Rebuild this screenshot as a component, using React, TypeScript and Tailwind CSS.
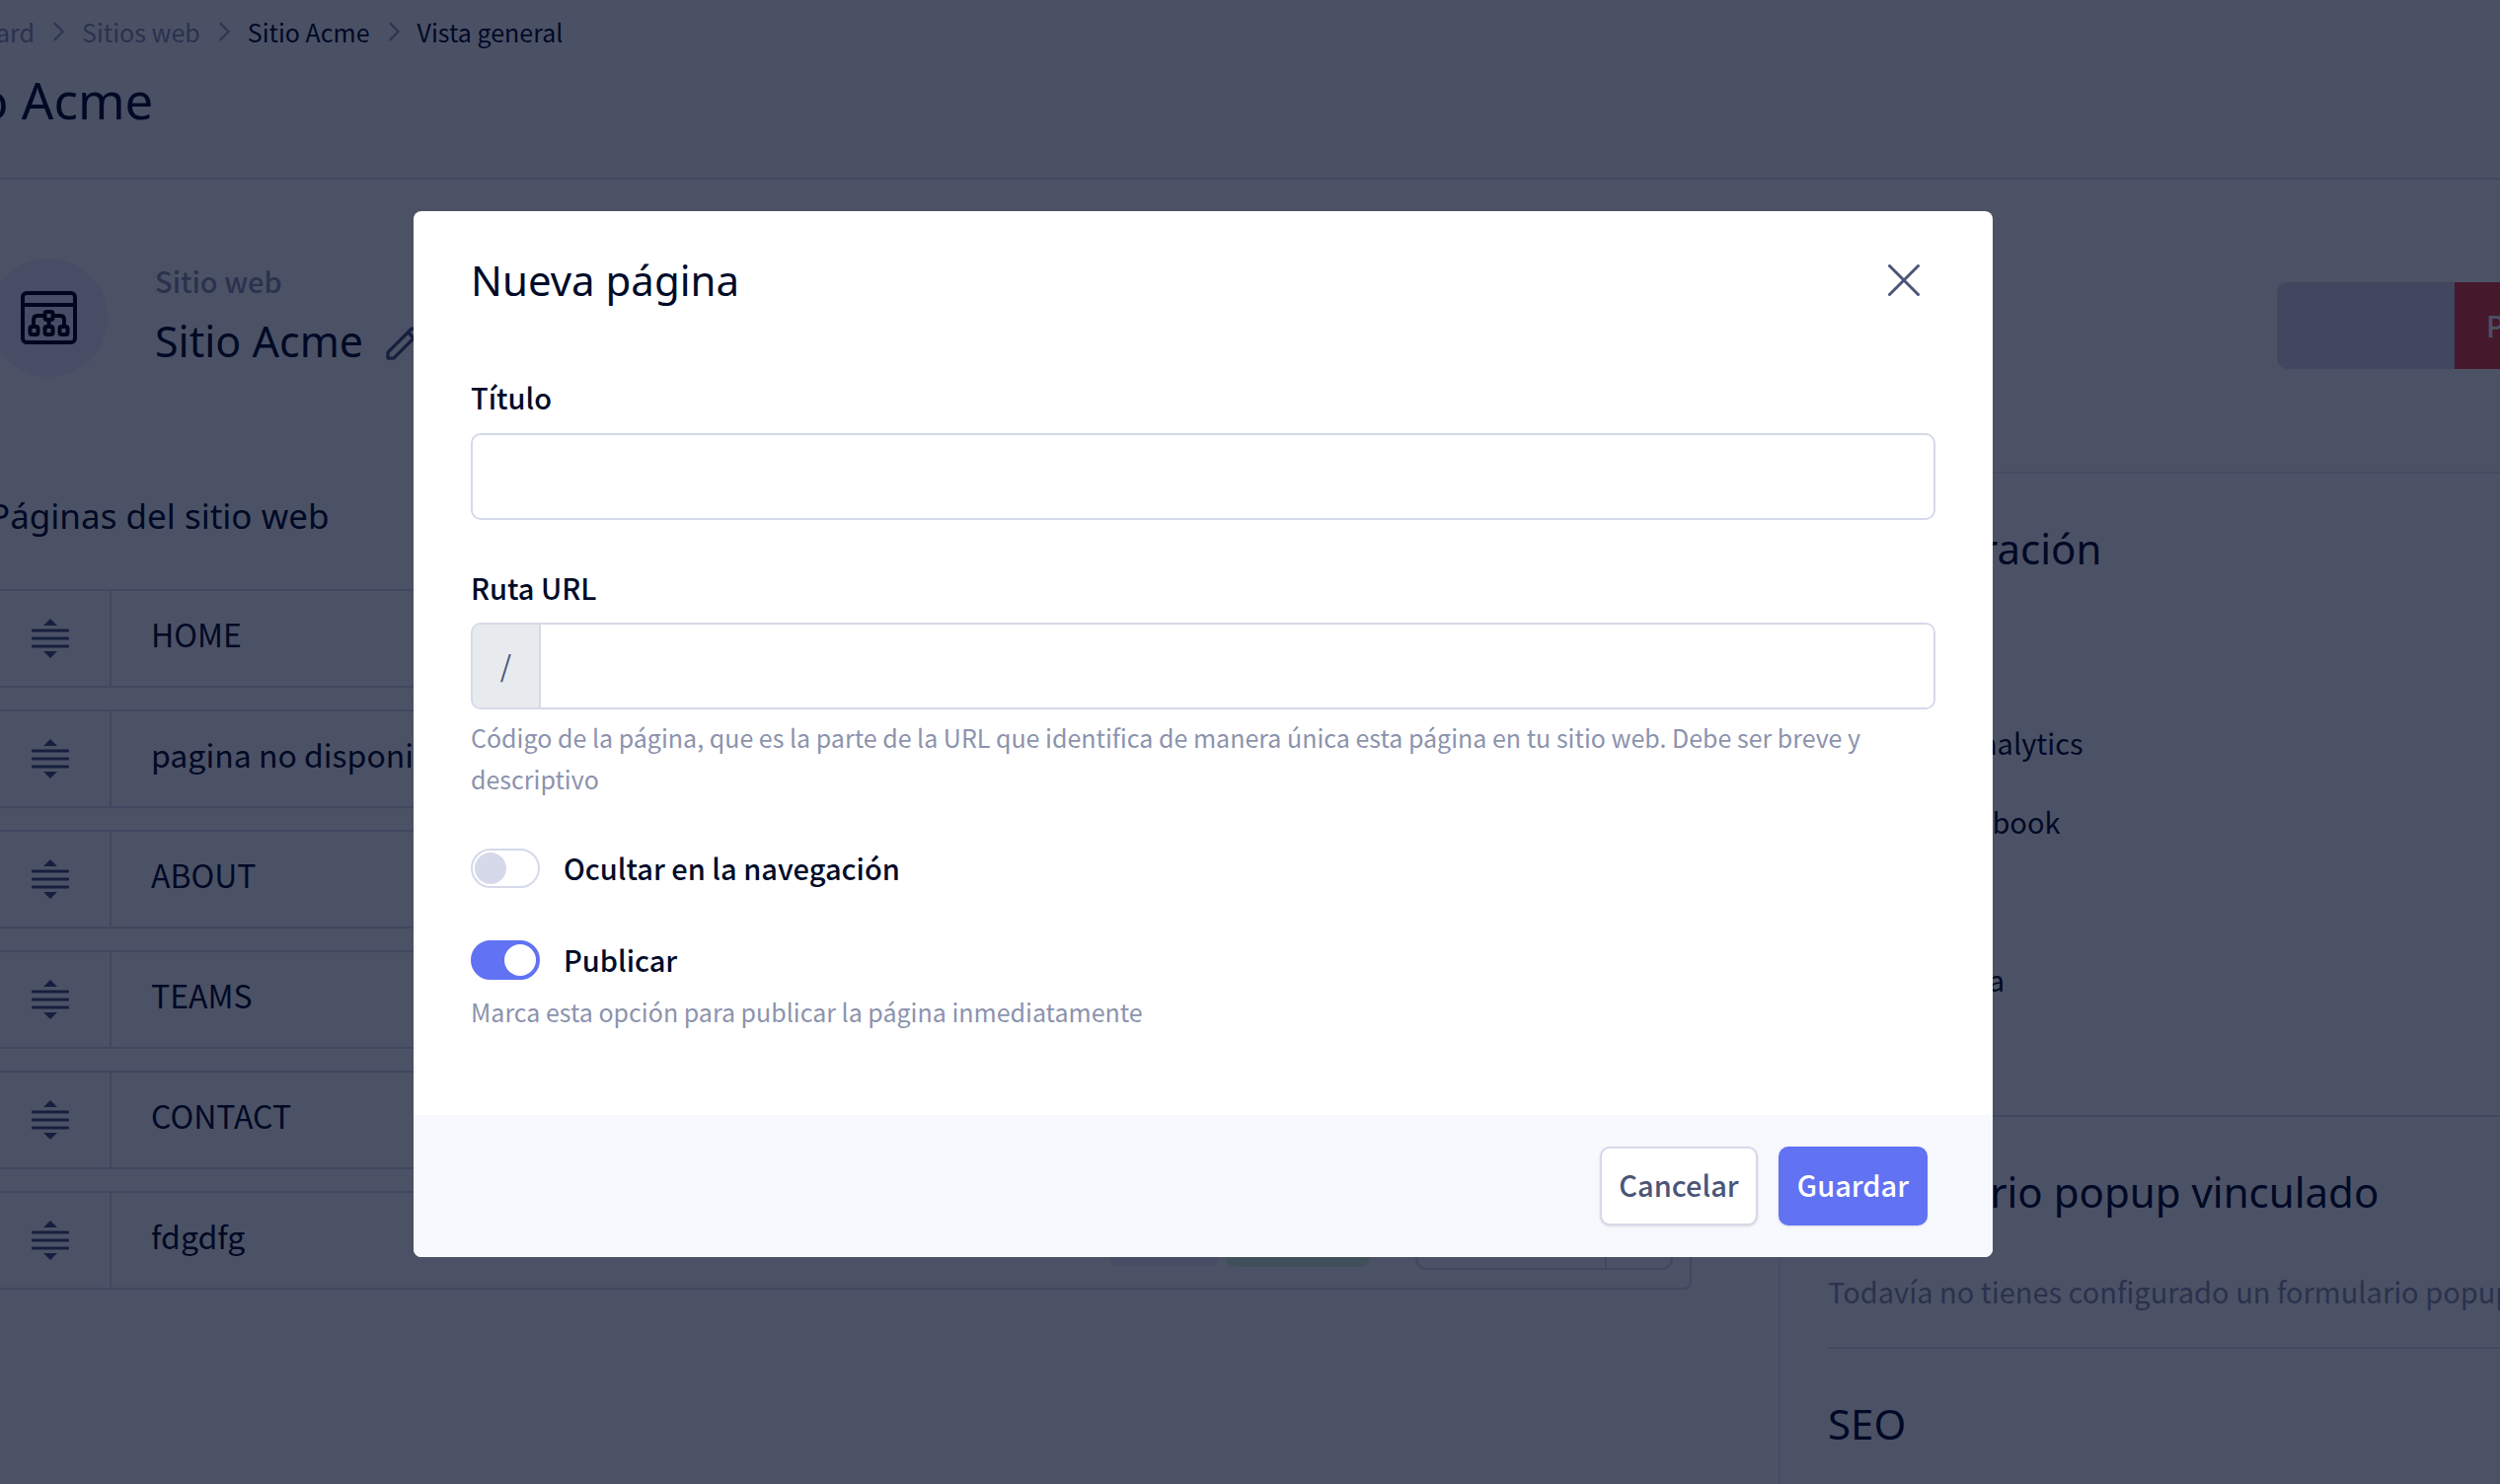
import React, { useState } from "react";

const pages = ["HOME", "pagina no disponible", "ABOUT", "TEAMS", "CONTACT", "fdgdfg"];
const settings = ["Google Analytics", "Pixel Facebook", "Idioma", "Estadística"];

function Chevron() {
  return (
    <svg className="size-7 shrink-0 text-[#9aa0bf]" viewBox="0 0 24 24" fill="none" stroke="currentColor" strokeWidth="2" strokeLinecap="round" strokeLinejoin="round" aria-hidden="true">
      <path d="M9 5l7 7-7 7" />
    </svg>
  );
}

function SiteIcon() {
  return (
    <svg className="h-[54px] w-[57px]" viewBox="0 0 57 54" fill="none" stroke="#00030f" strokeWidth="4" strokeLinejoin="round" aria-hidden="true">
      <rect x="2" y="2" width="53" height="50" rx="4" />
      <path d="M2 14h53" />
      <path d="M24 25h-7q-4 0-4 4v6M33 25h7q4 0 4 4v6M28.500 30v6" />
      <rect x="24.500" y="21" width="8" height="8" rx="2" />
      <rect x="9.500" y="36" width="8" height="8" rx="2" />
      <rect x="24.500" y="36" width="8" height="8" rx="2" />
      <rect x="39.500" y="36" width="8" height="8" rx="2" />
    </svg>
  );
}

function PencilIcon() {
  return (
    <svg className="size-10" viewBox="0 0 24 24" fill="none" stroke="currentColor" strokeWidth="2" strokeLinecap="round" strokeLinejoin="round" aria-hidden="true">
      <path d="M15.232 5.232l3.536 3.536m-2.036-5.036a2.500 2.500 0 113.536 3.536L6.500 21.036H3v-3.572L16.732 3.732z" />
    </svg>
  );
}

function DragIcon() {
  return (
    <svg className="h-10 w-[38px]" viewBox="0 0 38 40" fill="currentColor" aria-hidden="true">
      <path d="M19 0l7 7H12z" />
      <rect y="10.500" width="38" height="3" rx="1" />
      <rect y="18.500" width="38" height="3" rx="1" />
      <rect y="26.500" width="38" height="3" rx="1" />
      <path d="M19 40l7-7H12z" />
    </svg>
  );
}

function PageRow({ name }: { name: string }) {
  return (
    <li className="flex h-[100px] items-stretch rounded-lg border-2 border-[#d5d9e9]">
      <button aria-label={"Mover " + name} className="flex w-[122px] items-center justify-end border-r-2 border-[#d5d9e9] pr-[41px] text-[#4b5578]">
        <DragIcon />
      </button>
      <a href="#pagina" className="flex-1 self-center pb-2.5 pl-10 text-[32px] leading-[48px]">{name}</a>
      <div className="flex items-center pr-[17px]">
        <span className="mr-[7px] h-[52px] w-[110px] rounded-lg bg-[#ebedff]" />
        <span className="mr-[47px] h-[54px] w-[145px] rounded-lg bg-[#dbf5db]" />
        <div className="flex h-[60px] w-[261px] rounded-xl border-2 border-[#d5d9e9]">
          <button aria-label={"Editar " + name} className="flex-1" />
          <button aria-label={"Opciones de " + name} className="w-[67px] border-l-2 border-[#d5d9e9]" />
        </div>
      </div>
    </li>
  );
}

function Toggle({ id, label, on, onChange }: { id: string; label: string; on: boolean; onChange: (v: boolean) => void }) {
  return (
    <div className="flex h-10 items-center gap-6">
      <input
        id={id}
        type="checkbox"
        role="switch"
        checked={on}
        onChange={(e) => onChange(e.target.checked)}
        className="h-10 w-[70px] shrink-0 appearance-none rounded-full border-2 border-[#d5d9e9] bg-white p-0.5 before:block before:size-8 before:rounded-full before:bg-[#d5d9e9] checked:border-[#6172f3] checked:bg-[#6172f3] checked:before:ml-[30px] checked:before:bg-white"
      />
      <label htmlFor={id} className="pb-0.5 text-[29px] leading-10 font-medium">{label}</label>
    </div>
  );
}

function NewPageDialog() {
  const [hidden, setHidden] = useState(false);
  const [published, setPublished] = useState(true);
  return (
    <form role="dialog" aria-modal="true" aria-labelledby="dialog-title" onSubmit={(e) => e.preventDefault()} className="w-full max-w-[1600px] overflow-hidden rounded-lg bg-white">
      <div className="px-[58px] pt-11 pb-[84px]">
        <div className="flex items-center justify-between pr-4">
          <h2 id="dialog-title" className="font-['Noto_Sans',sans-serif] text-[42px] leading-[52px]">Nueva página</h2>
          <button type="button" aria-label="Cerrar" className="text-[#4b5578]">
            <svg className="size-8" viewBox="0 0 32 32" fill="none" stroke="currentColor" strokeWidth="3" strokeLinecap="round" aria-hidden="true">
              <path d="M1.500 1.500l29 29M30.500 1.500l-29 29" />
            </svg>
          </button>
        </div>

        <label htmlFor="titulo" className="mt-[68px] block text-[29px] leading-[48px] font-medium">Título</label>
        <input id="titulo" type="text" className="mt-[13px] block h-[88px] w-full rounded-[10px] border-2 border-[#d5d9e9] bg-white px-6 text-[29px] outline-none" />

        <label htmlFor="ruta" className="mt-11 block text-[29px] leading-[48px] font-medium">Ruta URL</label>
        <div className="mt-3 flex h-[88px] overflow-hidden rounded-[10px] border-2 border-[#d5d9e9]">
          <span className="flex w-[69px] items-center justify-center border-r-2 border-[#d5d9e9] bg-[#e7ebee] pb-1 text-[29px] leading-[48px] text-[#4b5578]">/</span>
          <input id="ruta" type="text" className="min-w-0 flex-1 bg-white px-6 text-[29px] outline-none" />
        </div>
        <p className="mt-[7px] text-[25px] leading-[42px] text-[#8c93ad]">
          Código de la página, que es la parte de la URL que identifica de manera única esta página en tu sitio web. Debe ser breve y descriptivo
        </p>

        <div className="mt-[50px]">
          <Toggle id="ocultar" label="Ocultar en la navegación" on={hidden} onChange={setHidden} />
        </div>
        <div className="mt-[53px]">
          <Toggle id="publicar" label="Publicar" on={published} onChange={setPublished} />
        </div>
        <p className="mt-[11px] text-[25px] leading-[42px] text-[#8c93ad]">Marca esta opción para publicar la página inmediatamente</p>
      </div>
      <div className="flex h-36 items-center justify-end gap-[21px] bg-[#f8f9fe] pr-[66px]">
        <button type="button" className="h-20 w-40 rounded-[10px] border-2 border-[#d5d9e9] bg-white pb-0.5 text-[29px] font-medium text-[#4b5578] shadow">Cancelar</button>
        <button type="submit" className="h-20 w-[151px] rounded-[10px] bg-[#6172f3] pb-0.5 text-[29px] font-medium text-white shadow">Guardar</button>
      </div>
    </form>
  );
}

export default function App() {
  return (
    <div className="h-screen overflow-hidden bg-white font-['Noto_Sans_CJK_SC',sans-serif] text-[#000b29]">
      <div className="relative -ml-[95px] min-h-full">
        <header className="border-b-2 border-[#d5d9e9] bg-[#fafaff] pb-[50px]">
          <nav aria-label="Ruta" className="flex h-16 items-center gap-2.5 text-[25px] leading-9">
            <a href="#dashboard" className="w-[130px] text-right text-[#8c93ad]">Dashboard</a>
            <Chevron />
            <a href="#sitios" className="text-[#8c93ad]">Sitios web</a>
            <Chevron />
            <a href="#acme">Sitio Acme</a>
            <Chevron />
            <span aria-current="page">Vista general</span>
          </nav>
          <h1 className="h-[66px] font-['Noto_Sans',sans-serif] text-[51px] leading-[74px]">Sitio Acme</h1>
        </header>

        <section className="-mr-[134px] flex h-[296px] items-start justify-between pl-[84px]">
          <div className="flex pt-20">
            <div className="flex size-[120px] items-center justify-center rounded-full bg-[#ebedfb]">
              <SiteIcon />
            </div>
            <div className="ml-12">
              <p className="text-[29px] leading-[44px] font-medium text-[#8c93ad]">Sitio web</p>
              <div className="mt-3 flex items-center gap-5">
                <h2 className="font-['Noto_Sans',sans-serif] text-[43px] leading-[56px]">Sitio Acme</h2>
                <button aria-label="Editar nombre" className="pt-1 text-[#4b5578]"><PencilIcon /></button>
              </div>
            </div>
          </div>
          <div className="mt-[104px] flex h-[88px] overflow-hidden rounded-[10px]">
            <button aria-label="Vista previa" className="w-[180px] bg-[#d5d9e9]" />
            <button className="w-[180px] bg-[#e6413f] pl-8 text-left text-[29px] font-medium text-white">Publicar</button>
          </div>
        </section>

        <div className="flex">
          <main className="flex-1 pr-[88px] pl-[84px]">
            <h2 className="pt-[22px] font-['Noto_Sans',sans-serif] text-[35px] leading-[46px]">Páginas del sitio web</h2>
            <ul className="mt-[51px] flex flex-col gap-[22px]">
              {pages.map((name) => (
                <PageRow key={name} name={name} />
              ))}
            </ul>
          </main>
          <aside className="h-[1100px] w-[731px] shrink-0 border-t-2 border-l-2 border-[#e6e9f5] pl-12">
            <h2 className="pt-12 font-['Noto_Sans',sans-serif] text-[42px] leading-[56px]">Configuración</h2>
            <ul className="mt-32 border-b-2 border-[#dadce6] pb-[98px]">
              {settings.map((s) => (
                <li key={s} className="flex h-20 items-center pl-[34px] text-[29px] leading-[44px]">
                  <a href="#ajuste">{s}</a>
                </li>
              ))}
            </ul>
            <h2 className="pt-12 font-['Noto_Sans',sans-serif] text-[42px] leading-[56px]">Formulario popup vinculado</h2>
            <p className="mt-[51px] border-b-2 border-[#dadce6] pb-9 text-[29px] leading-[42px] whitespace-nowrap text-[#8c93ad]">Todavía no tienes configurado un formulario popup</p>
            <h2 className="pt-12 font-['Noto_Sans',sans-serif] text-[42px] leading-[56px]">SEO</h2>
          </aside>
        </div>

        <div className="absolute inset-0 flex items-start justify-center bg-[#000924]/70 pt-[214px]">
          <NewPageDialog />
        </div>
      </div>
    </div>
  );
}
